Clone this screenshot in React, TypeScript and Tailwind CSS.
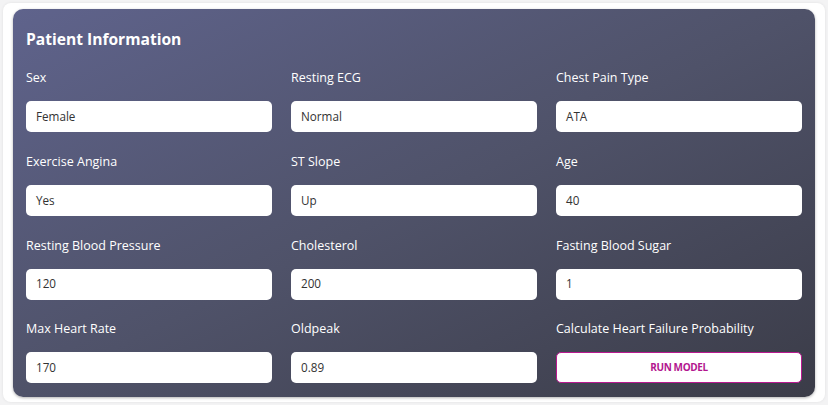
const fields: { label: string; value?: string }[] = [
  { label: "Sex", value: "Female" },
  { label: "Resting ECG", value: "Normal" },
  { label: "Chest Pain Type", value: "ATA" },
  { label: "Exercise Angina", value: "Yes" },
  { label: "ST Slope", value: "Up" },
  { label: "Age", value: "40" },
  { label: "Resting Blood Pressure", value: "120" },
  { label: "Cholesterol", value: "200" },
  { label: "Fasting Blood Sugar", value: "1" },
  { label: "Max Heart Rate", value: "170" },
  { label: "Oldpeak", value: "0.89" },
  { label: "Calculate Heart Failure Probability" },
];

export default function App() {
  return (
    <div
      className="h-[405px] w-[828px] bg-[#f3f3f4] p-[3px]"
      style={{ fontFamily: '"Open Sans", "Noto Sans", sans-serif' }}
    >
      <div className="h-full rounded-lg bg-white px-[10px] pt-[6px] shadow-[0_0_3px_rgba(0,0,0,0.08)]">
        <div className="rounded-[10px] bg-gradient-to-br from-[#5f638c] via-[#4f5269] to-[#3b3c48] px-[13px] pb-[14px] pt-[19px] shadow-[0_1px_3px_rgba(0,0,0,0.3)]">
          <h2 className="text-[15.6px] font-bold leading-[22px] text-white">Patient Information</h2>
          <div className="mt-[19px] grid grid-cols-3 gap-x-[19px] gap-y-[20.8px]">
            {fields.map(f => (
              <div key={f.label}>
                <div className="mb-[14px] text-[12.5px] leading-[18px] text-white">{f.label}</div>
                {f.value !== undefined ? (
                  <div className="flex h-[31px] items-center rounded-[5px] bg-white px-[10px] text-[11.7px] text-[#333]">
                    {f.value}
                  </div>
                ) : (
                  <button className="flex h-[31px] w-full items-center justify-center rounded-[5px] border border-[#b8198f] bg-white text-[10px] font-bold tracking-[-0.04em] text-[#b3168f]">
                    RUN MODEL
                  </button>
                )}
              </div>
            ))}
          </div>
        </div>
      </div>
    </div>
  );
}
